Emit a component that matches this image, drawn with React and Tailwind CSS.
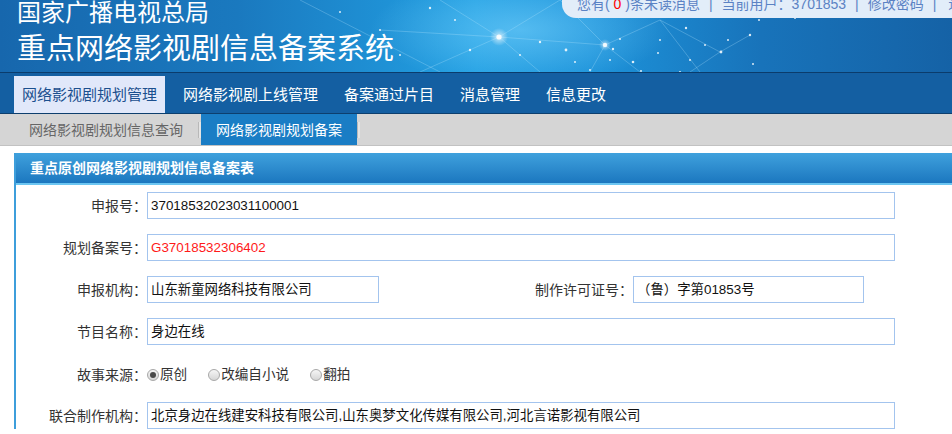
import React from "react";

const FONT = { fontFamily: '"Liberation Sans", "Noto Sans CJK SC", sans-serif' };

function HeaderDecor() {
  const dots = [
    [430, 8, 1.2], [455, 20, 1], [470, 50, 1.2], [499, 37, 2.6], [540, 42, 1.2], [566, 50, 1.4],
    [605, 45, 2.2], [613, 49, 1.2], [620, 39, 1], [633, 62, 1.3], [658, 53, 1], [686, 28, 1.2],
    [690, 60, 1], [721, 52, 1.4], [750, 35, 1.2], [759, 20, 1], [795, 18, 1], [753, 64, 1],
    [590, 70, 1], [641, 71, 1], [680, 72, 1], [520, 55, 1], [575, 62, 1], [610, 60, 1],
    [380, 30, 1], [400, 55, 1], [340, 12, 1], [705, 45, 1], [728, 40, 1], [660, 40, 1],
  ];
  return (
    <svg className="absolute inset-0 pointer-events-none" width="952" height="72" viewBox="0 0 952 72">
      <defs>
        <radialGradient id="glow" cx="0.5" cy="0.5" r="0.5">
          <stop offset="0" stopColor="#7fd6ff" stopOpacity="0.55" />
          <stop offset="1" stopColor="#7fd6ff" stopOpacity="0" />
        </radialGradient>
        <radialGradient id="star" cx="0.5" cy="0.5" r="0.5">
          <stop offset="0" stopColor="#ffffff" stopOpacity="1" />
          <stop offset="1" stopColor="#ffffff" stopOpacity="0" />
        </radialGradient>
      </defs>
      <ellipse cx="520" cy="30" rx="150" ry="55" fill="url(#glow)" />
      <g stroke="#bfe9ff" strokeOpacity="0.35" strokeWidth="0.8" fill="none">
        <line x1="499" y1="37" x2="440" y2="0" />
        <line x1="499" y1="37" x2="420" y2="72" />
        <line x1="499" y1="37" x2="605" y2="45" />
        <line x1="499" y1="37" x2="540" y2="72" />
        <line x1="499" y1="37" x2="560" y2="0" />
        <line x1="605" y1="45" x2="590" y2="72" />
        <line x1="605" y1="45" x2="660" y2="20" />
        <line x1="605" y1="45" x2="640" y2="72" />
        <line x1="660" y1="20" x2="700" y2="72" />
        <line x1="660" y1="20" x2="720" y2="52" />
        <line x1="720" y1="52" x2="690" y2="72" />
        <line x1="380" y1="30" x2="499" y2="37" />
        <line x1="300" y1="0" x2="440" y2="72" />
        <line x1="560" y1="0" x2="605" y2="45" />
        <line x1="750" y1="35" x2="720" y2="52" />
      </g>
      <circle cx="499" cy="37" r="9" fill="url(#star)" opacity="0.7" />
      <circle cx="605" cy="45" r="6" fill="url(#star)" opacity="0.6" />
      {dots.map(([x, y, r], i) => (
        <circle key={i} cx={x} cy={y} r={r} fill="#ffffff" opacity="0.85" />
      ))}
    </svg>
  );
}

function Field({ value, red, width }) {
  return (
    <div
      className={`h-[27px] border border-[#a3c4ee] bg-white flex items-center pl-[3px] text-[13.4px] ${
        red ? "text-[#ff1a1a]" : "text-[#111]"
      } ${width}`}
    >
      <span className="leading-[18px] whitespace-nowrap">{value}</span>
    </div>
  );
}

function Label({ children }) {
  return (
    <div className="w-[131px] shrink-0 text-right text-[14px] text-[#333] leading-[18px]">{children}</div>
  );
}

function Radio({ checked, label }) {
  return (
    <div className="flex items-center">
      <span className="w-[12px] h-[12px] rounded-full border border-[#a8a8a8] bg-gradient-to-b from-[#f6f6f6] to-[#d6d6d6] flex items-center justify-center">
        {checked && <span className="w-[6px] h-[6px] rounded-full bg-[#4a4a4a]" />}
      </span>
      <span className="ml-[1px] text-[13.6px] text-[#333] leading-[18px]">{label}</span>
    </div>
  );
}

function Sep({ right = "mr-[9px]" }) {
  return <span className={`ml-[9px] ${right}`}>|</span>;
}

export default function App() {
  return (
    <div className="w-[952px] h-[434px] overflow-hidden bg-white" style={FONT}>
      {/* Header */}
      <div className="relative h-[72px] overflow-hidden bg-[linear-gradient(90deg,#1767ad_0%,#1a79bf_25%,#22a0e3_50%,#1d93da_62%,#1873ba_80%,#1562a6_100%)]">
        <HeaderDecor />
        <div className="relative pl-[17px] text-white">
          <div className="text-[24px] leading-[25px]">国家广播电视总局</div>
          <div className="mt-[8px] text-[29px] leading-[32px]">重点网络影视剧信息备案系统</div>
        </div>
        <div className="absolute left-[562px] top-0 w-[400px] h-[18px] bg-[#e2edf9] rounded-bl-[14px] overflow-hidden">
          <div className="pl-[15px] -mt-[5px] text-[14px] leading-[18px] text-[#5b82c4] whitespace-nowrap">
            您有(&nbsp;<span className="text-[#ff0000]">0</span>&nbsp;)条未读消息
            <Sep />
            当前用户：3701853
            <Sep />
            修改密码
            <Sep right="mr-[12px]" />
            退出
          </div>
        </div>
      </div>
      {/* Main nav */}
      <div className="h-[42px] bg-[#145fa2] border-t border-[#0b3c6c] border-b border-b-[#0d3f6e] flex items-end pl-[14px] gap-[10px]">
        {["网络影视剧规划管理", "网络影视剧上线管理", "备案通过片目", "消息管理", "信息更改"].map((t, i) => (
          <div
            key={t}
            className={`h-[37px] px-[8px] flex items-center text-[15px] leading-[20px] ${
              i === 0 ? "bg-[#e1e8fa] text-[#1b4f8e]" : "text-white"
            }`}
          >
            {t}
          </div>
        ))}
      </div>
      {/* Sub nav */}
      <div className="h-[32px] bg-[#d5d5d5] border-b border-[#c2c2c2] flex items-stretch pl-[14px]">
        <div className="px-[15px] flex items-center text-[14px] text-[#666] leading-[18px]">网络影视剧规划信息查询</div>
        <div className="self-center w-[3px] h-[16px] border-l border-[#b8b8b8] bg-[#e4e4e4]" />
        <div className="px-[15px] flex items-center bg-[#1a7dc5] text-[14px] text-white leading-[18px]">网络影视剧规划备案</div>
        <div className="self-center w-[3px] h-[16px] border-l border-[#b8b8b8] bg-[#e4e4e4]" />
      </div>
      {/* Panel */}
      <div className="mt-[7px] ml-[14px] border-l-2 border-[#3d9edb]">
        <div className="h-[32px] bg-gradient-to-b from-[#3fa1dd] to-[#1b77bf] border-b-2 border-[#6cc6f2] flex items-center pl-[14px]">
          <span className="text-white font-bold text-[14px] leading-[18px]">重点原创网络影视剧规划信息备案表</span>
        </div>
        <div className="pt-[7px] flex flex-col gap-[15px]">
          <div className="flex items-center">
            <Label>申报号：</Label>
            <Field value="37018532023031100001" width="w-[748px]" />
          </div>
          <div className="flex items-center">
            <Label>规划备案号：</Label>
            <Field value="G37018532306402" red width="w-[748px]" />
          </div>
          <div className="flex items-center">
            <Label>申报机构：</Label>
            <Field value="山东新童网络科技有限公司" width="w-[232px]" />
            <div className="ml-[156px] text-[14px] text-[#333] leading-[18px]">制作许可证号：</div>
            <Field value="（鲁）字第01853号" width="w-[231px]" />
          </div>
          <div className="flex items-center">
            <Label>节目名称：</Label>
            <Field value="身边在线" width="w-[748px]" />
          </div>
          <div className="flex items-center h-[27px] pt-[3px]">
            <Label>故事来源：</Label>
            <div className="flex items-center gap-[21px]">
              <Radio checked label="原创" />
              <Radio label="改编自小说" />
              <Radio label="翻拍" />
            </div>
          </div>
          <div className="flex items-center">
            <Label>联合制作机构：</Label>
            <Field value="北京身边在线建安科技有限公司,山东奥梦文化传媒有限公司,河北言诺影视有限公司" width="w-[748px]" />
          </div>
        </div>
      </div>
    </div>
  );
}
